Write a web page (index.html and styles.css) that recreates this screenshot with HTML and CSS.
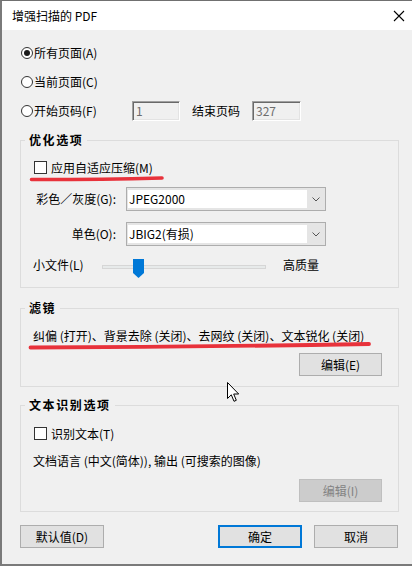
FILE: index.html
```html
<!DOCTYPE html>
<html lang="zh-CN">
<head>
<meta charset="utf-8">
<title>增强扫描的 PDF</title>
<link rel="stylesheet" href="styles.css">
</head>
<body>
<div class="window">
  <div class="titlebar">
    <span class="title">增强扫描的 PDF</span>
    <svg class="close" width="12" height="12" viewBox="0 0 12 12"><path d="M1 1 L11 11 M11 1 L1 11" stroke="#000" stroke-width="1.1" fill="none"/></svg>
  </div>
  <div class="content">
    <div class="radios">
      <div class="radio-row"><span class="radio checked"></span><span>所有页面(A)</span></div>
      <div class="radio-row"><span class="radio"></span><span>当前页面(C)</span></div>
      <div class="radio-row"><span class="radio"></span><span class="range-label">开始页码(F)</span><span class="field f1">1</span><span class="end-label">结束页码</span><span class="field f2">327</span></div>
    </div>

    <fieldset class="group g1">
      <legend>优化选项</legend>
      <div class="check-row annotated">
        <span class="checkbox"></span><span class="check-text">应用自适应压缩(M)</span>
        <svg class="redline r1" width="138" height="8" viewBox="0 0 138 8"><path d="M2.5 4.5 Q 70 4.6 133 3" stroke="#e8323b" stroke-width="3.6" stroke-linecap="round" fill="none"/></svg>
      </div>
      <div class="select-grid">
        <span class="sel-label">彩色／灰度(G):</span>
        <div class="select"><span class="sel-value">JPEG2000</span><span class="sel-arrow"><svg width="8" height="5" viewBox="0 0 8 5"><path d="M0.5 0.5 L4 4 L7.5 0.5" stroke="#555" stroke-width="1" fill="none"/></svg></span></div>
        <span class="sel-label">单色(O):</span>
        <div class="select"><span class="sel-value">JBIG2(有损)</span><span class="sel-arrow"><svg width="8" height="5" viewBox="0 0 8 5"><path d="M0.5 0.5 L4 4 L7.5 0.5" stroke="#555" stroke-width="1" fill="none"/></svg></span></div>
      </div>
      <div class="slider-row">
        <span class="sl-label">小文件(L)</span>
        <div class="track">
          <svg class="thumb" width="11" height="19" viewBox="0 0 11 19"><polygon points="0,0 11,0 11,14 5.5,19 0,14" fill="#0078d7"/></svg>
        </div>
        <span class="sl-high">高质量</span>
      </div>
    </fieldset>

    <fieldset class="group g2">
      <legend>滤镜</legend>
      <div class="text-line annotated">纠偏 (打开)、背景去除 (关闭)、去网纹 (关闭)、文本锐化 (关闭)
        <svg class="redline r2" width="346" height="10" viewBox="0 0 346 10"><path d="M2.5 6.5 Q 170 6 341 3" stroke="#e8323b" stroke-width="3.8" stroke-linecap="round" fill="none"/></svg>
      </div>
      <div class="btn-row"><button class="btn">编辑(E)</button></div>
    </fieldset>

    <fieldset class="group g3">
      <legend>文本识别选项</legend>
      <div class="check-row"><span class="checkbox"></span><span class="check-text">识别文本(T)</span></div>
      <div class="text-line lang">文档语言 (中文(简体)), 输出 (可搜索的图像)</div>
      <div class="btn-row"><button class="btn disabled">编辑(I)</button></div>
    </fieldset>

    <div class="footer">
      <button class="btn">默认值(D)</button>
      <span class="spacer"></span>
      <button class="btn primary">确定</button>
      <button class="btn">取消</button>
    </div>
  </div>

  <svg class="cursor" width="13" height="21" viewBox="0 0 13 21"><path d="M0.5 0.5 L0.5 16.5 L4.3 12.8 L7 19.3 L9.3 18.3 L6.7 12 L11.7 12 Z" fill="#fff" stroke="#000" stroke-width="1" stroke-linejoin="miter"/></svg>
</div>
</body>
</html>
```

FILE: styles.css
```css
* { box-sizing: border-box; }
html, body { margin: 0; padding: 0; }
body {
  width: 412px;
  height: 566px;
  overflow: hidden;
  font-family: "Noto Sans CJK SC", "Microsoft YaHei", sans-serif;
  font-size: 12px;
  color: #000;
  background: #f0f0f0;
}
.window {
  position: relative;
  height: 566px;
  border-top: 1px solid #707070;
  border-left: 2px solid #7a7a7a;
  border-bottom: 2px solid #7a7a7a;
  background: #f0f0f0;
  display: flex;
  flex-direction: column;
}
.titlebar {
  height: 29px;
  flex: none;
  background: #fff;
  display: flex;
  align-items: center;
  justify-content: space-between;
  padding: 0 7px 0 10px;
}
.title { line-height: 14px; }
.close { display: block; }

.content {
  flex: 1;
  padding-top: 13px;
}

.radios {
  display: flex;
  flex-direction: column;
  gap: 9px;
  padding-left: 19px;
}
.radio-row {
  display: flex;
  align-items: center;
  height: 20px;
  line-height: 14px;
}
.radio {
  flex: none;
  width: 12px;
  height: 12px;
  border: 1px solid #333;
  border-radius: 50%;
  background: #fff;
  margin-right: 1px;
  display: flex;
  align-items: center;
  justify-content: center;
}
.radio.checked::after {
  content: "";
  width: 6px;
  height: 6px;
  border-radius: 50%;
  background: #1a1a1a;
}
.range-label { width: 98px; flex: none; }
.end-label { margin: 0 12px; }
.field {
  height: 20px;
  line-height: 17px;
  padding-left: 3px;
  color: #6d6d6d;
  background: #f0f0f0;
  border: 1px solid;
  border-color: #a0a0a0 #ffffff #ffffff #a0a0a0;
  box-shadow: inset 1px 1px 0 #696969, inset -1px -1px 0 #e3e3e3;
}
.f1 { width: 48px; }
.f2 { width: 49px; }

.group {
  margin: 12px 13px 0 18px;
  padding: 0 16px 9px 12px;
  border: 1px solid #dcdcdc;
  min-width: 0;
}
.group legend {
  margin-left: -8px;
  padding: 0 4px;
  font-weight: 700;
  letter-spacing: 1.6px;
  line-height: 14px;
}
.g2 { margin-top: 13px; padding-bottom: 10px; }
.g3 { margin-top: 11px; padding-bottom: 9px; }

.annotated { position: relative; }
.redline { position: absolute; display: block; }
.r1 { left: -4px; top: 14px; }
.r2 { left: -5px; top: 12px; }

.check-row {
  display: flex;
  align-items: center;
  height: 13px;
  line-height: 13px;
  margin-top: 14px;
}
.g3 .check-row { margin-top: 15px; }
.checkbox {
  flex: none;
  width: 13px;
  height: 13px;
  border: 1px solid #333;
  background: #fff;
  margin-left: 1px;
}
.check-text { margin-left: 4px; }

.select-grid {
  display: grid;
  grid-template-columns: 83px 200px;
  grid-auto-rows: 24px;
  column-gap: 10px;
  row-gap: 11px;
  margin-top: 13px;
  align-items: center;
}
.sel-label {
  text-align: right;
  white-space: nowrap;
  line-height: 14px;
}
.select {
  height: 24px;
  display: flex;
  border: 1px solid #adadad;
  background: #e5e5e5;
  padding: 2px 0 2px 1px;
}
.sel-value {
  flex: 1;
  background: #fff;
  line-height: 18px;
  padding-left: 1px;
}
.sel-arrow {
  width: 18px;
  flex: none;
  display: flex;
  align-items: center;
  justify-content: center;
}
.sel-arrow svg { display: block; }

.slider-row {
  display: flex;
  align-items: flex-start;
  height: 20px;
  margin-top: 12px;
  line-height: 14px;
}
.sl-label { width: 69px; flex: none; }
.track {
  position: relative;
  width: 164px;
  height: 4px;
  margin-top: 7px;
  background: #e7eaea;
  border: 1px solid #d6d6d6;
  flex: none;
}
.thumb { position: absolute; left: 30px; top: -7px; display: block; }
.sl-high { margin-left: 17px; }

.text-line {
  margin-top: 14px;
  line-height: 14px;
  white-space: nowrap;
}
.lang { margin-top: 14px; }

.btn-row {
  display: flex;
  justify-content: flex-end;
  margin-top: 10px;
}
.g3 .btn-row { margin-top: 11px; }

.btn {
  width: 83px;
  height: 23px;
  padding: 0;
  margin: 0;
  font: inherit;
  line-height: 21px;
  color: #000;
  background: #e1e1e1;
  border: 1px solid #adadad;
  text-align: center;
}
.btn.disabled {
  background: #cccccc;
  border-color: #bfbfbf;
  color: #838383;
}
.btn.primary {
  border: 2px solid #0078d7;
  line-height: 19px;
}

.footer {
  display: flex;
  margin: 13px 14px 0 18px;
  gap: 12px;
}
.footer .btn { width: 84px; }
.spacer { flex: 1; }

.cursor { position: absolute; left: 225px; top: 381px; display: block; }
```
